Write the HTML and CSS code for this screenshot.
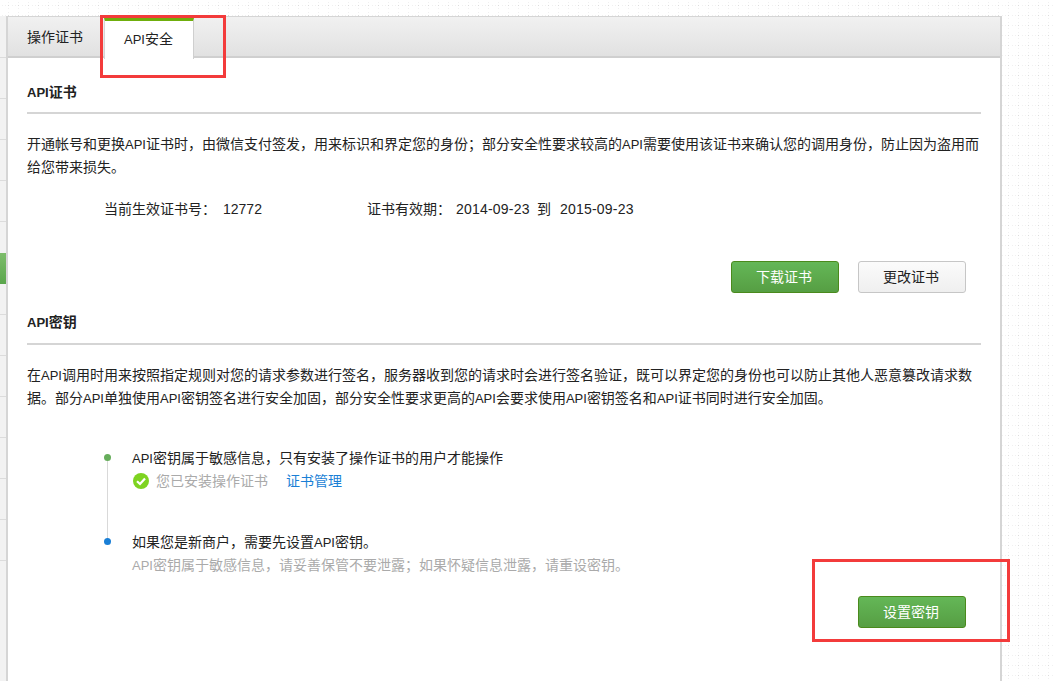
FILE: index.html
```html
<!DOCTYPE html>
<html lang="zh-CN">
<head>
<meta charset="utf-8">
<title>API安全</title>
<link rel="stylesheet" href="styles.css">
</head>
<body>
<div class="page">
  <aside class="side">
    <div class="side-row"></div>
    <div class="side-row"></div>
    <div class="side-row"></div>
    <div class="side-row"></div>
    <div class="side-row"></div>
    <div class="side-row short"></div>
    <div class="side-active"></div>
    <div class="side-row short2"></div>
    <div class="side-row"></div>
    <div class="side-row"></div>
    <div class="side-row"></div>
    <div class="side-row"></div>
    <div class="side-row"></div>
    <div class="side-row"></div>
  </aside>
  <main class="panel">
    <nav class="tabs">
      <a class="tab">操作证书</a>
      <a class="tab tab-on"><span class="api">API</span>安全</a>
    </nav>
    <div class="content">
      <section class="sec sec-cert">
        <h2 class="sec-title"><span class="api">API</span>证书</h2>
        <p class="desc">开通帐号和更换<span class="api">API</span>证书时，由微信支付签发，用来标识和界定您的身份；部分安全性要求较高的<span class="api">API</span>需要使用该证书来确认您的调用身份，防止因为盗用而给您带来损失。</p>
        <div class="info">
          <span class="info-a">当前生效证书号：</span><span class="info-b">12772</span>
          <span class="info-c">证书有效期：</span><span class="info-d date">2014-09-23</span><span class="info-e">到</span><span class="date">2015-09-23</span>
        </div>
        <div class="actions">
          <a class="btn btn-green">下载证书</a>
          <a class="btn btn-gray">更改证书</a>
        </div>
      </section>
      <section class="sec sec-key">
        <h2 class="sec-title"><span class="api">API</span>密钥</h2>
        <p class="desc">在<span class="api">API</span>调用时用来按照指定规则对您的请求参数进行签名，服务器收到您的请求时会进行签名验证，既可以界定您的身份也可以防止其他人恶意篡改请求数据。部分<span class="api">API</span>单独使用<span class="api">API</span>密钥签名进行安全加固，部分安全性要求更高的<span class="api">API</span>会要求使用<span class="api">API</span>密钥签名和<span class="api">API</span>证书同时进行安全加固。</p>
        <ul class="steps">
          <li class="step step-one">
            <div class="step-main"><span class="api">API</span>密钥属于敏感信息，只有安装了操作证书的用户才能操作</div>
            <div class="step-sub">
              <svg class="check" width="16" height="16" viewBox="0 0 16 16" aria-hidden="true"><circle cx="8" cy="8" r="8" fill="#7ed321"/><path d="M4 8.2 7 11l5-5.6" fill="none" stroke="#fff" stroke-width="2.2"/></svg>
              <span class="muted">您已安装操作证书</span>
              <a class="link">证书管理</a>
            </div>
          </li>
          <li class="step step-two">
            <div class="step-main">如果您是新商户，需要先设置<span class="api">API</span>密钥。</div>
            <div class="step-sub muted"><span class="api">API</span>密钥属于敏感信息，请妥善保管不要泄露；如果怀疑信息泄露，请重设密钥。</div>
          </li>
        </ul>
        <div class="actions actions-last">
          <a class="btn btn-green">设置密钥</a>
        </div>
      </section>
    </div>
  </main>
</div>
<div class="mark mark-tab"></div>
<div class="mark mark-btn"></div>
</body>
</html>
```
FILE: styles.css
```css
* { box-sizing: border-box; }
html, body { height: 100%; }
body {
  margin: 0;
  overflow: hidden;
  color: #222;
  font: 14px/23px "Liberation Sans", "Noto Sans CJK SC", sans-serif;
  background-color: #fff;
  background-image:
    radial-gradient(circle at 8.5px 5.5px, #dcdcdc .6px, transparent .9px),
    radial-gradient(circle at 8.5px 2.5px, #f0f0f0 .6px, transparent .9px),
    radial-gradient(circle at 8.5px 8.5px, #f0f0f0 .6px, transparent .9px),
    radial-gradient(circle at 2.5px 5.5px, #f0f0f0 .6px, transparent .9px),
    radial-gradient(circle at 5.5px 5.5px, #f0f0f0 .6px, transparent .9px);
  background-size: 10px 10px;
}
.page { display: flex; padding-top: 16px; height: 681px; width: 1002px; align-items: stretch; }
.side { width: 6px; flex: none; background: #f2f2f2; overflow: hidden; display: flex; flex-direction: column; }
.side-row { height: 41px; flex: none; border-bottom: 1px solid #dcdcdc; }
.side-row:first-child { height: 42px; }
.side-row.short { height: 31px; border-bottom: 0; }
.side-row.short2 { height: 31px; }
.side-active { height: 31px; flex: none; background: linear-gradient(#7dbd6b, #5aa64c); }
.panel { flex: 1; background: #fff; border: solid #d5d5d5; border-width: 1px 2px 0 2px; }
.tabs { display: flex; height: 41px; background: linear-gradient(#f1f1f1, #e1e1e1); border-bottom: 2px solid #cfcfcf; }
.tab { height: 40px; padding: 0 19px; line-height: 40px; color: #222; white-space: nowrap; }
.tab:first-child { width: 96px; }
.tab-on {
  width: 90px;
  height: 41px;
  margin-top: 1px;
  padding: 0 0 0 19px;
  line-height: 37px;
  background: #fff;
  border-top: 3px solid #6fae0c;
  border-left: 1px solid #d5d5d5;
  border-right: 1px solid #cfcfcf;
}
.api { font-size: 13px; }
.date { letter-spacing: .2px; }
.content { padding: 0 19px; }
.sec-title { margin: 0; font-size: 14px; line-height: 23px; font-weight: 700; border-bottom: 2px solid #d5d5d5; }
.sec-cert .sec-title { height: 56px; padding-top: 23px; }
.sec-key .sec-title { height: 52px; padding-top: 18px; }
.desc { margin: 19px 0 0; }
.info { margin: 19px 0 0 77px; display: flex; }
.info-a { width: 119px; }
.info-b { width: 144px; }
.info-c { width: 89px; }
.info-d { width: 81px; }
.info-e { width: 23px; }
.actions { display: flex; justify-content: flex-end; gap: 19px; margin-top: 40px; padding-right: 15px; }
.sec-key .actions-last { margin-top: 21px; }
.btn { display: block; width: 108px; height: 32px; padding-right: 2px; line-height: 30px; text-align: center; border-radius: 3px; border: 1px solid; }
.btn-green { color: #fff; background: linear-gradient(#64b757, #569e43); border-color: #4a8a1c; }
.btn-gray { color: #222; background: linear-gradient(#fbfbfb, #efefef); border-color: #c6c6c6; }
.steps { list-style: none; margin: 37px 0 0 73px; padding: 0; }
.step { position: relative; height: 84px; padding-left: 32px; line-height: 22px; }
.step-two { height: 44px; }
.step::before { content: ""; position: absolute; left: 4px; top: 7px; width: 7px; height: 7px; border-radius: 50%; background: #66ad5b; z-index: 1; }
.step-one::after { content: ""; position: absolute; left: 7px; top: 10px; width: 1px; height: 84px; background: #d9d9d9; }
.step-two::before { background: #1a7fd6; }
.step-sub { display: flex; align-items: center; color: #aaa; }
.step-sub.muted { display: block; }
.check { margin: 0 7px 0 1px; }
.muted { color: #aaa; }
.link { margin-left: 18px; color: #1a7fd6; }
.mark { position: absolute; border: 3px solid #f33b3b; }
.mark-tab { left: 100px; top: 15px; width: 126px; height: 63px; }
.mark-btn { left: 812px; top: 559px; width: 198px; height: 83px; }
```
